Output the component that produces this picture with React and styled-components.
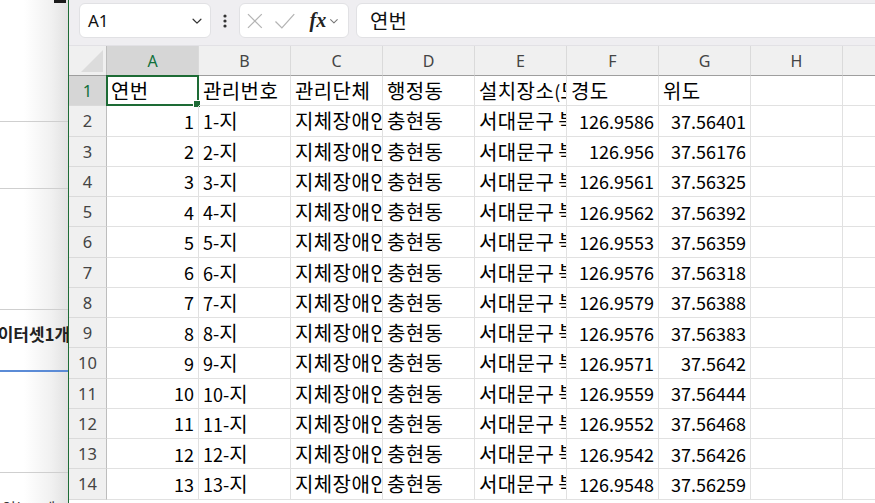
import React from 'react';
import styled, { createGlobalStyle } from 'styled-components';

const GlobalStyle = createGlobalStyle`
  html, body {
    margin: 0;
    padding: 0;
    overflow: hidden;
    background: #fff;
  }
  body {
    font-family: "Noto Sans", "Noto Sans CJK KR", sans-serif;
  }
`;

const COLS = ['A', 'B', 'C', 'D', 'E', 'F', 'G', 'H', 'I'];

// lng / lat pairs for rows 2..14
const coords = [
  ['126.9586', '37.56401'],
  ['126.956', '37.56176'],
  ['126.9561', '37.56325'],
  ['126.9562', '37.56392'],
  ['126.9553', '37.56359'],
  ['126.9576', '37.56318'],
  ['126.9579', '37.56388'],
  ['126.9576', '37.56383'],
  ['126.9571', '37.5642'],
  ['126.9559', '37.56444'],
  ['126.9552', '37.56468'],
  ['126.9542', '37.56426'],
  ['126.9548', '37.56259'],
];

const Screen = styled.div`
  display: flex;
  width: 875px;
  height: 503px;
  overflow: hidden;
`;

/* the web page that sits behind the excel window */
const BackPage = styled.div`
  position: relative;
  width: 68px;
  flex: none;
  display: flex;
  flex-direction: column;
  background: linear-gradient(to right, #ffffff 35%, #f1f1f1 75%, #e2e2e2 100%);
  overflow: hidden;
`;

const TopNub = styled.div`
  position: absolute;
  top: 0;
  right: 2px;
  width: 12px;
  height: 3px;
  background: #1a1a1a;
`;

const PageBlock = styled.div`
  flex: none;
  height: ${p => p.$h}px;
  border-bottom: ${p => p.$line || '1px solid #cfcfcf'};
  box-sizing: border-box;
  display: flex;
  align-items: ${p => p.$align || 'center'};
  justify-content: flex-start;
  white-space: nowrap;
`;

const PageTitle = styled.span`
  flex: none;
  font-family: "Noto Sans CJK KR", sans-serif;
  font-weight: 700;
  font-size: 17px;
  color: #222;
  margin-left: -18px;
  margin-bottom: 14px;
`;

const PageFoot = styled.span`
  flex: none;
  font-family: "Noto Sans CJK KR", sans-serif;
  font-size: 15px;
  color: #333;
  margin-top: 24px;
  margin-left: 2px;
`;

const Excel = styled.div`
  flex: 1;
  display: flex;
  flex-direction: column;
  border-left: 1px solid #1d6b35;
  background: #fff;
  min-width: 0;
`;

const FormulaBar = styled.div`
  height: 46px;
  flex: none;
  display: flex;
  align-items: flex-start;
  padding: 3px 0 0 10px;
  box-sizing: border-box;
  background: #efeef1;
  border-bottom: 1px solid #e2e1e5;
`;

const Box = styled.div`
  height: 35px;
  box-sizing: border-box;
  background: #fff;
  border: 1px solid #e1e1e4;
  border-radius: 6px;
  display: flex;
  align-items: center;
`;

const NameBox = styled(Box)`
  width: 132px;
  padding: 0 6px 0 8px;
  justify-content: space-between;
  font-size: 17px;
  color: #111;
`;

const FnBox = styled(Box)`
  width: 110px;
  padding: 0 8px 0 6px;
  gap: 10px;
`;

const Input = styled(Box)`
  flex: 1;
  margin-left: 7px;
  margin-right: -8px;
  padding-left: 13px;
  font-family: "Noto Sans CJK KR", sans-serif;
  font-size: 20px;
  color: #111;
`;

const Dots = styled.div`
  width: 28px;
  height: 35px;
  display: flex;
  align-items: center;
  justify-content: center;
`;

const Fx = styled.span`
  font-family: "Liberation Serif", serif;
  font-style: italic;
  font-weight: 700;
  font-size: 20px;
  color: #222;
  margin-left: 4px;
  margin-right: -8px;
`;

const Sheet = styled.div`
  flex: 1;
  display: grid;
  grid-template-columns: 38px repeat(9, 92px);
  grid-template-rows: 30px;
  grid-auto-rows: 30.25px;
  overflow: hidden;
`;

const Corner = styled.div`
  background: #f0f0f0;
  border-right: 1px solid #bdbdbd;
  border-bottom: 1px solid #9e9e9e;
  position: relative;
  &::after {
    content: '';
    position: absolute;
    right: 3px;
    bottom: 3px;
    border-style: solid;
    border-width: 0 0 22px 22px;
    border-color: transparent transparent #dcdcdc transparent;
  }
`;

const ColHead = styled.div`
  background: ${p => (p.$active ? '#d6d6d6' : '#f0f0f0')};
  border-right: 1px solid #dadada;
  border-bottom: 1px solid #9e9e9e;
  display: flex;
  align-items: center;
  justify-content: center;
  font-size: 16px;
  color: ${p => (p.$active ? '#0f703b' : '#444')};
`;

const RowHead = styled.div`
  background: ${p => (p.$active ? '#d6d6d6' : '#f0f0f0')};
  border-right: 1px solid #bdbdbd;
  border-bottom: 1px solid #dadada;
  display: flex;
  align-items: center;
  justify-content: center;
  font-size: 16.5px;
  color: ${p => (p.$active ? '#0f703b' : '#444')};
`;

const Cell = styled.div`
  position: relative;
  border-right: 1px solid #e1e1e1;
  border-bottom: 1px solid #e1e1e1;
  display: flex;
  align-items: center;
  justify-content: ${p => (p.$num ? 'flex-end' : 'flex-start')};
  padding: 0 ${p => (p.$num ? '4px' : '0')} 0 ${p => (p.$num ? '0' : '4px')};
  overflow: hidden;
  white-space: pre;
  font-family: "Noto Sans CJK KR", sans-serif;
  font-size: 18px;
  color: #000;
  min-width: 0;
`;

/* hangul runs are drawn a little larger, like Malgun Gothic in the original */
const Hangul = styled.span`
  font-size: 20px;
  letter-spacing: 0.4px;
`;

const Selected = styled.div`
  position: absolute;
  inset: -1px -1px -1px -1px;
  border: 2px solid #1d6b35;
  pointer-events: none;
`;

const Handle = styled.div`
  position: absolute;
  right: -4px;
  bottom: -4px;
  width: 6px;
  height: 6px;
  background: #1d6b35;
  border: 1px solid #fff;
`;

const SelCell = styled(Cell)`
  overflow: visible;
`;

const Chevron = ({ size = 14, color = '#333' }) => (
  <svg width={size} height={size} viewBox="0 0 16 16" fill="none">
    <path d="M3.5 6 L8 10.5 L12.5 6" stroke={color} strokeWidth="1.4" strokeLinecap="round" strokeLinejoin="round" />
  </svg>
);

const MoreIcon = () => (
  <svg width="4" height="16" viewBox="0 0 4 16">
    <circle cx="2" cy="3" r="1.6" fill="#333" />
    <circle cx="2" cy="8" r="1.6" fill="#333" />
    <circle cx="2" cy="13" r="1.6" fill="#333" />
  </svg>
);

const CrossIcon = () => (
  <svg width="18" height="18" viewBox="0 0 18 18">
    <path d="M2 2 L16 16 M16 2 L2 16" stroke="#b4b4b4" strokeWidth="1.3" />
  </svg>
);

const CheckIcon = () => (
  <svg width="22" height="18" viewBox="0 0 22 18">
    <path d="M1.5 9.5 L8 16 L20.5 2" stroke="#b4b4b4" strokeWidth="1.3" fill="none" />
  </svg>
);

// split a string into hangul / other runs, kept in one inline box
function Txt({ children }) {
  const parts = String(children).split(/([\uAC00-\uD7A3]+)/).filter(Boolean);
  return (
    <span>
      {parts.map((p, i) =>
        /[\uAC00-\uD7A3]/.test(p) ? <Hangul key={i}>{p}</Hangul> : <React.Fragment key={i}>{p}</React.Fragment>
      )}
    </span>
  );
}

export default function App() {
  const rows = coords.map((c, i) => ({
    n: String(i + 1),
    code: `${i + 1}-지`,
    org: '지체장애인편의시설',
    dong: '충현동',
    place: '서대문구 북아현로',
    lng: c[0],
    lat: c[1],
  }));

  return (
    <Screen>
      <GlobalStyle />
      <BackPage>
        <TopNub />
        <PageBlock $h={122} />
        <PageBlock $h={67} />
        <PageBlock $h={121} />
        <PageBlock $h={62} $line="2px solid #5b8bd6">
          <PageTitle>데이터셋1개</PageTitle>
        </PageBlock>
        <PageBlock $h={101} />
        <PageBlock $h={40} $align="flex-start" $line="none">
          <PageFoot>있는 - 데</PageFoot>
        </PageBlock>
      </BackPage>

      <Excel>
        <FormulaBar>
          <NameBox>
            <span>A1</span>
            <Chevron />
          </NameBox>
          <Dots>
            <MoreIcon />
          </Dots>
          <FnBox>
            <CrossIcon />
            <CheckIcon />
            <Fx>fx</Fx>
            <Chevron size={12} color="#777" />
          </FnBox>
          <Input>연번</Input>
        </FormulaBar>

        <Sheet>
          <Corner />
          {COLS.map(c => (
            <ColHead key={c} $active={c === 'A'}>{c === 'I' ? '' : c}</ColHead>
          ))}

          <RowHead $active>1</RowHead>
          <SelCell>
            <Txt>연번</Txt>
            <Selected>
              <Handle />
            </Selected>
          </SelCell>
          <Cell><Txt>관리번호</Txt></Cell>
          <Cell><Txt>관리단체</Txt></Cell>
          <Cell><Txt>행정동</Txt></Cell>
          <Cell><Txt>설치장소(도로명)</Txt></Cell>
          <Cell><Txt>경도</Txt></Cell>
          <Cell><Txt>위도</Txt></Cell>
          <Cell />
          <Cell />

          {rows.map((r, i) => (
            <React.Fragment key={r.n}>
              <RowHead>{i + 2}</RowHead>
              <Cell $num>{r.n}</Cell>
              <Cell><Txt>{r.code}</Txt></Cell>
              <Cell><Txt>{r.org}</Txt></Cell>
              <Cell><Txt>{r.dong}</Txt></Cell>
              <Cell><Txt>{r.place}</Txt></Cell>
              <Cell $num>{r.lng}</Cell>
              <Cell $num>{r.lat}</Cell>
              <Cell />
              <Cell />
            </React.Fragment>
          ))}
        </Sheet>
      </Excel>
    </Screen>
  );
}
